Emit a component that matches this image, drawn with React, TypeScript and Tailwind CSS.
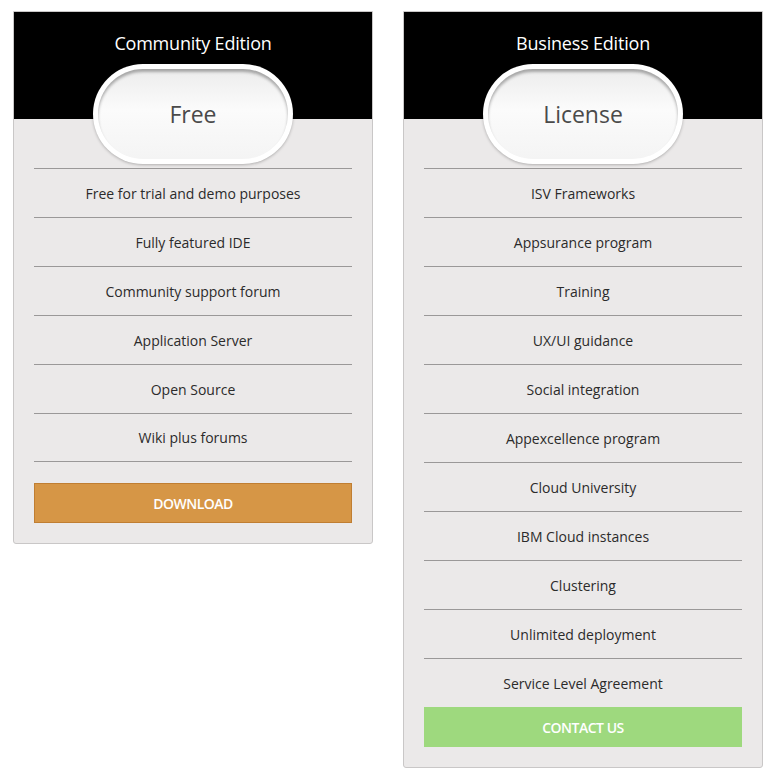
const community = [
  "Free for trial and demo purposes",
  "Fully featured IDE",
  "Community support forum",
  "Application Server",
  "Open Source",
  "Wiki plus forums",
];

const business = [
  "ISV Frameworks",
  "Appsurance program",
  "Training",
  "UX/UI guidance",
  "Social integration",
  "Appexcellence program",
  "Cloud University",
  "IBM Cloud instances",
  "Clustering",
  "Unlimited deployment",
  "Service Level Agreement",
];

function PlanCard({
  title,
  price,
  items,
  button,
  buttonClass,
  closed,
}: {
  title: string;
  price: string;
  items: string[];
  button: string;
  buttonClass: string;
  closed: boolean;
}) {
  return (
    <div className="w-[360px] border border-[#c9c7c7] bg-[#ebe9e9] rounded-b-[3px]">
      {/* header */}
      <div className="h-[107px] bg-black flex flex-col items-center pt-[19px]">
        <div className="text-white text-[18px] leading-[24px] tracking-[-0.2px]">{title}</div>
        <div className="relative z-10 mt-[9px] w-[200px] h-[100px] shrink-0 rounded-full bg-white p-[5px] shadow-[0_1px_3px_rgba(0,0,0,0.25)]">
          <div className="w-full h-full rounded-full flex items-center justify-center bg-[linear-gradient(180deg,#ececec_0%,#fbfbfb_45%,#f4f4f4_100%)] shadow-[inset_0_3px_3px_rgba(0,0,0,0.3)]">
            <span className="text-[23px] text-[#4a4a4a]">{price}</span>
          </div>
        </div>
      </div>

      {/* list */}
      <div className="px-[20px] pt-[49px] pb-[20px]">
        <ul>
          {items.map((it, i) => (
            <li
              key={it}
              className={`h-[49px] flex items-center justify-center border-t border-[#9a9898] text-[14px] text-[#2b2b2b] ${
                closed && i === items.length - 1 ? "border-b" : ""
              }`}
            >
              {it}
            </li>
          ))}
        </ul>
        <button
          className={`w-full h-[40px] text-white text-[14px] font-semibold uppercase tracking-[-0.5px] ${buttonClass} ${
            closed ? "mt-[21px]" : ""
          }`}
        >
          {button}
        </button>
      </div>
    </div>
  );
}

export default function App() {
  return (
    <div
      className="min-h-[781px] bg-white flex items-start gap-[30px] pl-[13px] pt-[11px]"
      style={{ fontFamily: "'Open Sans', 'Liberation Sans', sans-serif" }}
    >
      <PlanCard
        title="Community Edition"
        price="Free"
        items={community}
        button="Download"
        buttonClass="bg-[#d69646] border border-[#c07e32]"
        closed
      />
      <PlanCard
        title="Business Edition"
        price="License"
        items={business}
        button="Contact Us"
        buttonClass="bg-[#9ed97e]"
        closed={false}
      />
    </div>
  );
}
